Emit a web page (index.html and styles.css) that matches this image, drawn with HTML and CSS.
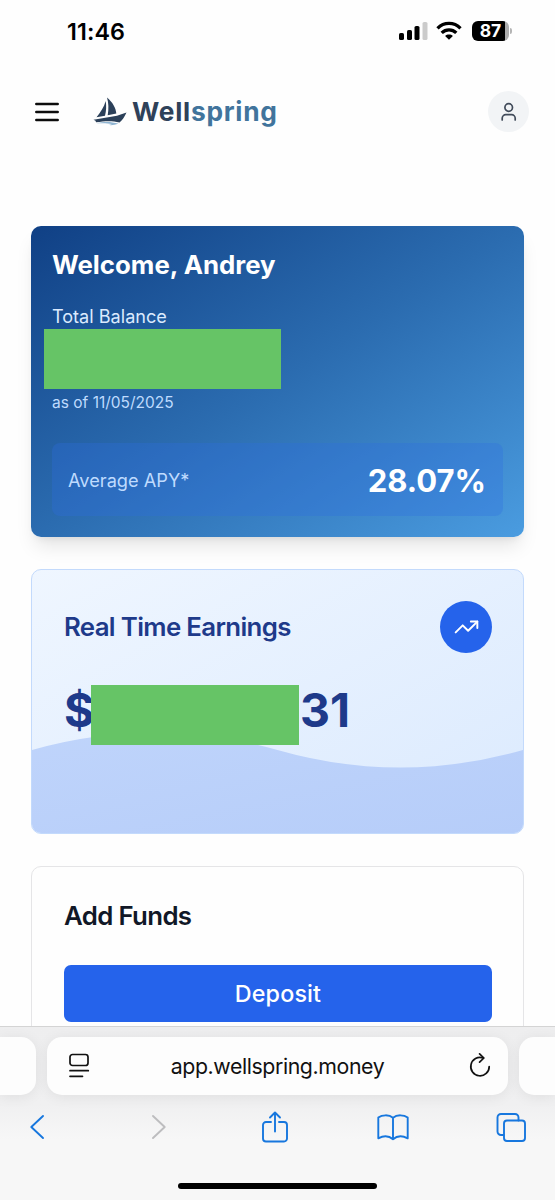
FILE: index.html
```html
<!DOCTYPE html>
<html lang="en">
<head>
    <meta charset="UTF-8">
    <meta name="viewport" content="width=device-width, initial-scale=1.0">
    <title>Wellspring</title>
    <link rel="stylesheet" href="styles.css">
</head>
<body>

<div class="statusBar">
    <span class="time">11:46</span>
    <div class="statusIcons">
        <svg width="29" height="20" viewBox="0 0 29 20">
            <rect x="0" y="12" width="5" height="7" rx="1.6"/>
            <rect x="8" y="9" width="5" height="10" rx="1.6"/>
            <rect x="15.500" y="5" width="5" height="14" rx="1.6"/>
            <rect x="23.500" y="1" width="5" height="18" rx="1.6" fill="#cbcbcb"/>
        </svg>
        <svg class="wifi" width="26" height="20" viewBox="0 0 26 20" fill="none" stroke="#000" stroke-width="3.300">
            <path d="M1.500 7.300C8 .8 18 .8 24.500 7.300"/>
            <path d="M5.700 11.900C9.800 7.900 16.200 7.900 20.300 11.900"/>
            <path d="M13 18.800l-3.900-3.900c2.200-1.900 5.600-1.900 7.800 0z" fill="#000" stroke="none"/>
        </svg>
        <div class="battery"><span>87</span></div>
        <i class="batteryCap"></i>
    </div>
</div>

<header class="appHeader">
    <svg class="menuIcon" width="24" height="20" viewBox="0 0 24 20" stroke="#0c0c0c" stroke-width="2.500" stroke-linecap="round">
        <path d="M1.300 2h21.400M1.300 10h21.400M1.300 18h21.400"/>
    </svg>
    <div class="logo">
        <svg width="34" height="30" viewBox="0 0 34 30">
            <path d="M14 .5C19.500 5 23 11 23.300 16.500L14.700 18.300C15.800 12 15.700 6 14 .5z" fill="#2b4059"/>
            <path d="M12.700 4C13.500 9 13.300 14 12 18.700L3.500 20.300C7.500 15.500 11 10 12.700 4z" fill="#2b4059"/>
            <path d="M.5 22.700L24 18.800 33.500 15.600C31.500 20 29.500 23 26.500 25.600 19 23.500 12 24 3 25.300L2.500 23.800z" fill="#2b4059"/>
            <path d="M3.500 26.300c8-2 14-1.800 22 .3-3.500 1.500-6.500 1.800-10 1.500 2-.6 2.500-.8 3.500-1.100-5-1-9-.9-15.500-.7z" fill="#8fb4d1"/>
        </svg>
        <span class="wordmark">Well<b>spring</b></span>
    </div>
    <button class="avatar" aria-label="Account">
        <svg width="20" height="20" viewBox="0 0 20 20" fill="none" stroke="#414b5a" stroke-width="1.700" stroke-linecap="round">
            <circle cx="9.700" cy="5.500" r="3.800"/>
            <path d="M3.200 18v-1.700a3.600 3.600 0 0 1 3.600-3.600h5.800a3.600 3.600 0 0 1 3.600 3.600V18"/>
        </svg>
    </button>
</header>

<main class="content">
    <section class="balanceCard">
        <h1>Welcome, Andrey</h1>
        <p class="balanceLabel">Total Balance</p>
        <div class="balanceMask"></div>
        <p class="balanceDate">as of 11/05/2025</p>
        <div class="apy">
            <span>Average APY*</span>
            <strong>28.07%</strong>
        </div>
    </section>

    <section class="earningsCard">
        <svg class="wave" viewBox="0 0 492 102" preserveAspectRatio="none">
            <defs>
                <linearGradient id="waveFill" x1="0" y1="0" x2="1" y2="1">
                    <stop offset="0" stop-color="#bfd4fb"/>
                    <stop offset="1" stop-color="#b6cdf9"/>
                </linearGradient>
            </defs>
            <path d="M0 19Q123-16 246 19T492 19V102H0z" fill="url(#waveFill)"/>
        </svg>
        <div class="cardHead">
            <h2>Real Time Earnings</h2>
            <div class="trend">
                <svg width="27" height="26" viewBox="0 0 24 24" fill="none" stroke="#fff" stroke-width="1.800" stroke-linecap="round" stroke-linejoin="round">
                    <path d="M22 7l-8.500 8.500-5-5L2 17"/>
                    <path d="M16 7h6v6"/>
                </svg>
            </div>
        </div>
        <div class="amount"><span class="dollar">$</span><i class="amountMask"></i><span>31</span></div>
    </section>

    <section class="fundsCard">
        <h2>Add Funds</h2>
        <button class="deposit">Deposit</button>
    </section>
</main>

<footer class="browserBar">
    <div class="tabs">
        <div class="tab previousTab"></div>
        <div class="tab addressTab">
            <svg width="22" height="26" viewBox="0 0 22 26" fill="none" stroke="#111" stroke-width="1.700" stroke-linecap="round">
                <rect x="2" y="1.500" width="18" height="11" rx="2.500"/>
                <path d="M2 17.700h18.300M2 23.300h12.500"/>
            </svg>
            <span class="url">app.wellspring.money</span>
            <svg width="22" height="26" viewBox="0 0 22 26" fill="none" stroke="#111" stroke-width="1.700" stroke-linecap="round" stroke-linejoin="round">
                <path d="M14 4.900A9.200 9.200 0 1 0 20.200 13.500"/>
                <path d="M10.600 .9l4.300 4.100-4.300 4.200"/>
            </svg>
        </div>
        <div class="tab nextTab"></div>
    </div>
    <nav class="toolbar">
        <svg width="32" height="32" viewBox="0 0 32 32"><path d="M21 5L9.300 16 21 27"/></svg>
        <svg class="disabled" width="32" height="32" viewBox="0 0 32 32"><path d="M13 5l11.700 11L13 27"/></svg>
        <svg width="32" height="32" viewBox="0 0 32 32"><path d="M12 11H7a3 3 0 0 0-3 3v13.500a3 3 0 0 0 3 3h18a3 3 0 0 0 3-3V14a3 3 0 0 0-3-3h-5M16 20.500V1.500M11 6.500l5-5 5 5"/></svg>
        <svg width="32" height="32" viewBox="0 0 32 32"><path d="M16 6.800C12 3.300 5 3.800 1.300 6.500v20.800c5-2.600 10.700-2.600 14.700 1 4-3.600 9.700-3.600 14.700-1V6.500C27 3.800 20 3.300 16 6.800zM16 6.800v21.500"/></svg>
        <svg width="32" height="32" viewBox="0 0 32 32"><path d="M8.500 24H6a3.500 3.500 0 0 1-3.500-3.500V6.500A3.500 3.500 0 0 1 6 3h14A3.500 3.500 0 0 1 23.500 6.500v3"/><rect x="9" y="9.500" width="21" height="20.500" rx="3"/></svg>
    </nav>
    <div class="homeIndicator"></div>
</footer>

</body>
</html>
```
FILE: styles.css
```css
* {
    box-sizing: border-box;
}
body {
    margin: 0;
    width: 555px;
    height: 1200px;
    overflow: hidden;
    display: flex;
    flex-direction: column;
    font-family: Inter, "Liberation Sans", sans-serif;
    background-color: #fefefe;
    color: #111827;
}
h1, h2, p {
    margin: 0;
}
svg {
    display: block;
    flex: none;
}
button {
    border: 0;
    padding: 0;
    font-family: inherit;
}

/* Phone status bar */
.statusBar {
    height: 64px;
    flex: none;
    display: flex;
    justify-content: space-between;
    padding: 0 43px 0 67px;
}
.time {
    font-size: 23.3px;
    font-weight: 600;
    line-height: 64px;
    letter-spacing: 0.1px;
    color: #000;
}
.statusIcons {
    display: flex;
    align-items: center;
    height: 62px;
}
.wifi {
    margin: 0 10px 0 8px;
}
.battery {
    width: 37px;
    height: 20px;
    border-radius: 6px;
    background: linear-gradient(to right, #000 88%, #adadad 88%);
    color: #fff;
    font-size: 17.5px;
    font-weight: 700;
    line-height: 20px;
    text-align: center;
}
.batteryCap {
    width: 2px;
    height: 6px;
    margin-left: 1px;
    border-radius: 0 3px 3px 0;
    background-color: #b5b5b5;
}

/* App header */
.appHeader {
    height: 95px;
    flex: none;
    display: flex;
    align-items: center;
    padding: 0 26px 0 35px;
}
.logo {
    display: flex;
    align-items: center;
    margin-left: 34px;
}
.wordmark {
    margin-left: 5px;
    padding-top: 1px;
    font-size: 26.3px;
    font-weight: 700;
    line-height: 30px;
    letter-spacing: 0.75px;
    color: #2f4159;
}
.wordmark b {
    font-weight: 700;
    color: #41749c;
}
.avatar {
    width: 41px;
    height: 41px;
    margin-left: auto;
    border-radius: 50%;
    background-color: #f2f4f6;
    display: flex;
    align-items: center;
    justify-content: center;
}

/* Cards */
.content {
    flex: 1;
    min-height: 0;
    overflow: hidden;
    padding: 67px 31px 0;
    display: flex;
    flex-direction: column;
    gap: 32px;
}
.balanceCard {
    height: 311px;
    flex: none;
    padding: 21px;
    border-radius: 10px;
    background: linear-gradient(to bottom right, #104085, #2b6cb0 50%, #4a9ce0);
    box-shadow: 0 13px 19px -4px rgba(0,0,0,0.1), 0 5px 8px -5px rgba(0,0,0,0.1);
    color: #fff;
}
.balanceCard h1 {
    font-size: 25.8px;
    font-weight: 700;
    line-height: 36px;
}
.balanceLabel {
    padding-top: 21px;
    font-size: 18.1px;
    line-height: 25px;
    color: #dbeafe;
}
.balanceMask {
    width: 237px;
    height: 60px;
    margin-left: -8px;
    background-color: #66c466;
}
.balanceDate {
    font-size: 15.5px;
    line-height: 27px;
    color: #bfdbfe;
}
.apy {
    height: 73px;
    margin-top: 27px;
    padding: 1px 17px 0 16px;
    border-radius: 8px;
    background-color: rgba(48,108,225,0.3);
    display: flex;
    align-items: center;
    justify-content: space-between;
}
.apy span {
    font-size: 18.2px;
    color: #bfdbfe;
}
.apy strong {
    font-size: 31px;
    font-weight: 700;
}
.earningsCard {
    position: relative;
    height: 265px;
    flex: none;
    padding: 31px 31px 31px 32px;
    border: 1px solid #c3dafc;
    border-radius: 10px;
    background: linear-gradient(to bottom right, #eff6ff, #dbeafe);
    overflow: hidden;
    color: #1e3a8a;
}
/* The wave lies behind the amount */
.wave {
    position: absolute;
    left: 0;
    bottom: 0;
    width: 100%;
    height: 102px;
}
.cardHead {
    position: relative;
    display: flex;
    align-items: center;
    justify-content: space-between;
}
h2 {
    font-size: 25.8px;
    font-weight: 600;
    line-height: 36px;
    letter-spacing: -0.65px;
}
.trend {
    width: 52px;
    height: 52px;
    border-radius: 50%;
    background-color: #2563eb;
    display: flex;
    align-items: center;
    justify-content: center;
}
.amount {
    position: relative;
    display: flex;
    margin-top: 32px;
    font-size: 46.5px;
    font-weight: 700;
    line-height: 50px;
}
.dollar {
    width: 27px;
    letter-spacing: -1px;
}
.amountMask {
    width: 208px;
    height: 60px;
    margin-right: 1px;
    background-color: #66c466;
    z-index: 1;
}
.fundsCard {
    height: 300px;
    flex: none;
    padding: 31px 31px 31px 32px;
    border: 1px solid #e5e5e7;
    border-radius: 10px;
}
.deposit {
    width: 100%;
    height: 57px;
    margin-top: 31px;
    border-radius: 7px;
    background-color: #2563eb;
    color: #fff;
    font-size: 23.3px;
    font-weight: 500;
    letter-spacing: 0.15px;
}

/* Browser chrome at the bottom */
.browserBar {
    height: 174px;
    flex: none;
    overflow: hidden;
    border-top: 1px solid #d4d4d4;
    background: linear-gradient(#eeeeef, #f0f0f1 45%, #f7f7f7 65%);
}
.tabs {
    display: flex;
    gap: 11px;
    padding-top: 10px;
}
.tab {
    height: 58px;
    border-radius: 15px;
    background-color: #fdfdfd;
    box-shadow: 0 2px 14px rgba(0,0,0,0.07);
}
.previousTab {
    flex: 1;
    border-radius: 0 15px 15px 0;
}
.nextTab {
    flex: 1;
    border-radius: 15px 0 0 15px;
}
.addressTab {
    width: 461px;
    flex: none;
    display: flex;
    align-items: center;
    justify-content: space-between;
    padding: 0 17px 0 21px;
}
.url {
    margin-right: 4px;
    font-size: 21.3px;
    letter-spacing: -0.4px;
    color: #111;
}
.toolbar {
    display: flex;
    justify-content: space-between;
    padding: 16px 28px 0 22px;
    fill: none;
    stroke: #1777de;
    stroke-width: 1.9;
    stroke-linecap: round;
    stroke-linejoin: round;
}
.toolbar .disabled {
    stroke: #bdbdbf;
}
.homeIndicator {
    width: 199px;
    height: 6px;
    margin: 40px auto 0;
    border-radius: 3px;
    background-color: #000;
}
```
